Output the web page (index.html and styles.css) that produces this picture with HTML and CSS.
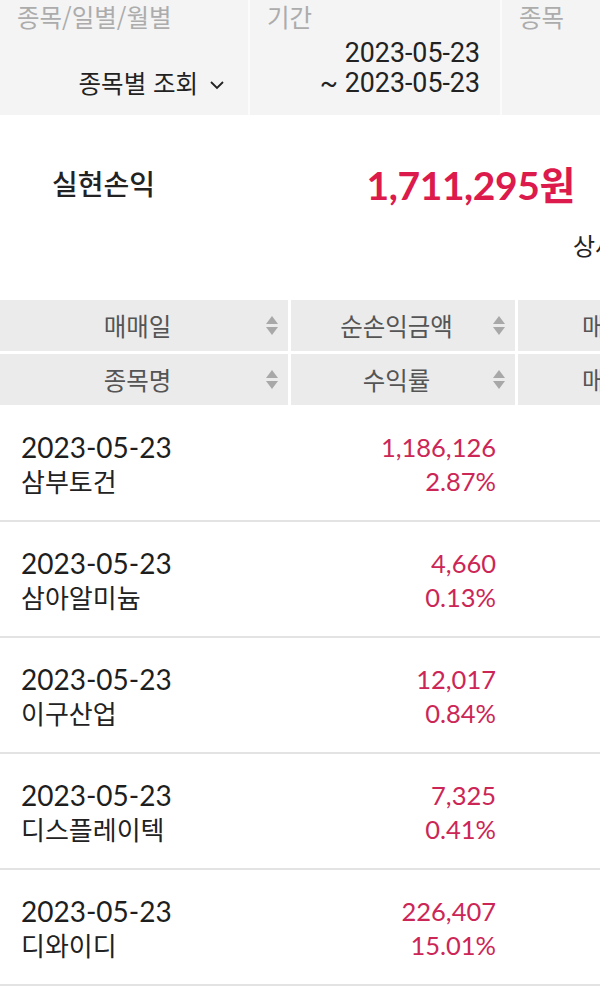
FILE: index.html
```html
<!DOCTYPE html>
<html lang="ko">
<head>
<meta charset="utf-8">
<link rel="stylesheet" href="styles.css">
</head>
<body>
<div class="page">
  <div class="filters">
    <div class="fcell">
      <div class="flabel">종목/일별/월별</div>
      <div class="fvalue">종목별 조회
        <svg class="chev" width="16" height="10" viewBox="0 0 16 10"><path d="M2 2 L8 8 L14 2" fill="none" stroke="#222" stroke-width="1.8"/></svg>
      </div>
    </div>
    <div class="fcell">
      <div class="flabel">기간</div>
      <div class="fvalue dates"><div>2023-05-23</div><div>~ 2023-05-23</div></div>
    </div>
    <div class="fcell">
      <div class="flabel">종목</div>
      <div class="fvalue"></div>
    </div>
  </div>

  <div class="summary">
    <div class="sum-row">
      <span class="sum-label">실현손익</span>
      <span class="sum-value">1,711,295원</span>
    </div>
    <div class="detail-row"><span>상세보기 ›</span></div>
  </div>

  <div class="table">
    <div class="thead">
      <div class="th">매매일<span class="sort"></span></div>
      <div class="th">순손익금액<span class="sort"></span></div>
      <div class="th">매도금액<span class="sort"></span></div>
      <div class="th">종목명<span class="sort"></span></div>
      <div class="th">수익률<span class="sort"></span></div>
      <div class="th">매수금액<span class="sort"></span></div>
    </div>

    <div class="tr">
      <div class="td left"><div class="date">2023-05-23</div><div class="name">삼부토건</div></div>
      <div class="td right"><div class="num">1,186,126</div><div class="num">2.87%</div></div>
      <div class="td"></div>
    </div>
    <div class="tr">
      <div class="td left"><div class="date">2023-05-23</div><div class="name">삼아알미늄</div></div>
      <div class="td right"><div class="num">4,660</div><div class="num">0.13%</div></div>
      <div class="td"></div>
    </div>
    <div class="tr">
      <div class="td left"><div class="date">2023-05-23</div><div class="name">이구산업</div></div>
      <div class="td right"><div class="num">12,017</div><div class="num">0.84%</div></div>
      <div class="td"></div>
    </div>
    <div class="tr">
      <div class="td left"><div class="date">2023-05-23</div><div class="name">디스플레이텍</div></div>
      <div class="td right"><div class="num">7,325</div><div class="num">0.41%</div></div>
      <div class="td"></div>
    </div>
    <div class="tr last">
      <div class="td left"><div class="date">2023-05-23</div><div class="name">디와이디</div></div>
      <div class="td right"><div class="num">226,407</div><div class="num">15.01%</div></div>
      <div class="td"></div>
    </div>
  </div>
</div>
</body>
</html>
```
FILE: styles.css
```css
html, body {
  margin: 0;
  padding: 0;
  background: #fff;
  overflow: hidden;
}
body {
  width: 600px;
  height: 990px;
  font-family: "Noto Sans CJK KR", "Noto Sans", sans-serif;
  color: #222;
}
.page {
  width: 780px;
}

/* filter bar */
.filters {
  display: grid;
  grid-template-columns: 248px 250px 280px;
  column-gap: 2px;
  background: #fbfbfb;
  height: 115px;
}
.fcell {
  background: #f4f4f4;
  display: flex;
  flex-direction: column;
  padding: 2px 20px 17px 17px;
}
.flabel {
  font-size: 24.5px;
  line-height: 30px;
  color: #acacac;
}
.fvalue {
  margin-top: auto;
  text-align: right;
  font-size: 24.5px;
  line-height: 30px;
  color: #222;
}
.fcell:first-child .fvalue {
  padding-right: 3px;
}
.chev {
  margin-left: 4px;
  vertical-align: 3px;
}
.dates {
  font-family: Roboto, "Noto Sans CJK KR", sans-serif;
  font-size: 26.8px;
}

/* summary */
.summary {
  padding: 43px 0 40px;
}
.sum-row {
  width: 600px;
  box-sizing: border-box;
  padding: 0 25px 0 52px;
  display: flex;
  justify-content: space-between;
  align-items: center;
  height: 50px;
}
.sum-label {
  font-size: 28px;
  font-weight: 500;
  color: #222;
}
.sum-value {
  font-family: Lato, "Noto Sans CJK KR", sans-serif;
  font-weight: 700;
  font-size: 39px;
  color: #dc1a4b;
  letter-spacing: -0.4px;
}
.detail-row {
  margin-top: 22px;
  padding-left: 573px;
  font-size: 24px;
  line-height: 30px;
  white-space: nowrap;
  color: #222;
}

/* table */
.table {
  width: 780px;
}
.thead {
  display: grid;
  grid-template-columns: 288px 224px 231px;
  column-gap: 3px;
  row-gap: 3px;
  border-bottom: 1px solid #fff;
}
.th {
  position: relative;
  background: #ebebeb;
  height: 51px;
  line-height: 51px;
  font-size: 24.5px;
  color: #555;
  text-align: center;
  padding-right: 13px;
  white-space: nowrap;
}
.sort {
  position: absolute;
  right: 10px;
  top: 16px;
  width: 12px;
  height: 20px;
}
.sort::before, .sort::after {
  content: "";
  position: absolute;
  left: 0;
  border-left: 6px solid transparent;
  border-right: 6px solid transparent;
}
.sort::before {
  top: 0;
  border-bottom: 8px solid #a8a8a8;
}
.sort::after {
  top: 11px;
  border-top: 8px solid #a8a8a8;
}

.tr {
  display: grid;
  grid-template-columns: 288px 224px 231px;
  column-gap: 3px;
  padding: 24px 0 22px;
  border-bottom: 2px solid #e3e3e3;
}
.td {
  line-height: 34px;
}
.left {
  padding-left: 21px;
}
.right {
  text-align: right;
  padding-right: 19px;
}
.date {
  font-family: Lato, "Noto Sans CJK KR", sans-serif;
  font-size: 28px;
  color: #1e1e1e;
}
.name {
  font-size: 26px;
  color: #222;
}
.num {
  font-family: Lato, "Noto Sans CJK KR", sans-serif;
  font-size: 25.5px;
  color: #cc2657;
}
```
